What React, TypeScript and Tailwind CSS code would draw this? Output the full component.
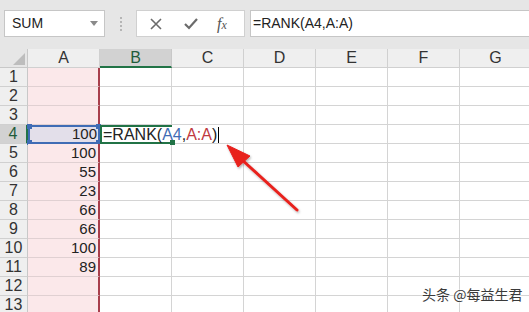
import React from 'react';

const cols = ['A', 'B', 'C', 'D', 'E', 'F', 'G'];
const values: Record<number, string> = { 4: '100', 5: '100', 6: '55', 7: '23', 8: '66', 9: '66', 10: '100', 11: '89' };
const rows = Array.from({ length: 13 }, (_, i) => i + 1);

const font = { fontFamily: '"Liberation Sans", Arial, sans-serif' };

function Handle({ className }: { className: string }) {
  return <span className={`absolute w-[5px] h-[5px] ${className}`} />;
}

function Toolbar() {
  return (
    <div className="h-[49px] bg-[#e6e6e6] flex items-start pt-[10px]">
      {/* Name box */}
      <div className="ml-[4px] w-[101px] h-[27px] bg-white border border-[#c6c6c6] flex items-center justify-between pl-[7px] pr-[6px]">
        <span className="text-[14px] text-[#222]">SUM</span>
        <span className="w-0 h-0 border-l-[4px] border-r-[4px] border-t-[5px] border-l-transparent border-r-transparent border-t-[#8a8a8a]" />
      </div>
      <div className="w-[31px] h-[27px] flex flex-col items-center justify-center gap-[2px]">
        {[0, 1, 2, 3].map((i) => (
          <span key={i} className="w-[2px] h-[2px] bg-[#b5b5b5]" />
        ))}
      </div>
      {/* Buttons */}
      <div className="w-[109px] h-[27px] bg-white border border-[#d0d0d0] flex items-center pl-[12px]">
        <svg width="14" height="14" viewBox="0 0 14 14">
          <path d="M2 2 L12 12 M12 2 L2 12" stroke="#6b6b6b" strokeWidth="1.6" />
        </svg>
        <svg className="ml-[20px]" width="16" height="14" viewBox="0 0 16 14">
          <path d="M2 7 L6 11 L14 2" stroke="#6b6b6b" strokeWidth="2.2" fill="none" />
        </svg>
        <span className="ml-[18px] text-[16px] italic text-[#555] leading-none" style={{ fontFamily: '"Liberation Serif", serif' }}>
          f<span className="text-[12px]">x</span>
        </span>
      </div>
      {/* Formula input */}
      <div className="ml-[5px] flex-1 h-[27px] bg-white border border-r-0 border-[#c6c6c6] flex items-center pl-[2px]">
        <span className="text-[14px] text-[#222]">=RANK(A4,A:A)</span>
      </div>
    </div>
  );
}

function HeaderRow() {
  return (
    <div className="flex h-[19px]">
      <div className="w-[28px] shrink-0 bg-[#e6e6e6] border-r border-b border-[#c8c8c8] relative">
        <svg className="absolute right-[2px] bottom-[2px]" width="12" height="12" viewBox="0 0 12 12">
          <polygon points="12,0 12,12 0,12" fill="#bdbdbd" />
        </svg>
      </div>
      {cols.map((c) => (
        <div
          key={c}
          className={`w-[72px] shrink-0 flex items-center justify-center text-[16px] ${
            c === 'B'
              ? 'bg-[#d2d2d2] border-b-2 border-b-[#217346] border-r border-r-[#c8c8c8] text-[#1f5c3a]'
              : 'bg-[#efefef] border-r border-b border-[#d0d0d0] text-[#333]'
          }`}
        >
          {c}
        </div>
      ))}
    </div>
  );
}

function Row({ n }: { n: number }) {
  const active = n === 4;
  return (
    <div className="flex h-[19px]">
      <div
        className={`w-[28px] shrink-0 flex items-center justify-center text-[16px] border-b border-[#d0d0d0] ${
          active ? 'bg-[#d2d2d2] border-r-2 border-r-[#217346] text-[#1f5c3a]' : 'bg-[#efefef] border-r border-r-[#c8c8c8] text-[#333]'
        }`}
      >
        {n}
      </div>
      {/* Column A */}
      <div
        className={`relative w-[72px] shrink-0 flex items-center justify-end text-[15px] text-[#222] ${
          active
            ? 'bg-[#e3dfea] border-2 border-[#3f6cb5] pr-[1px]'
            : 'bg-[#fbe8ea] border-r-2 border-r-[#a83e4c] border-b border-b-[#e0d0d2] pr-[2px]'
        }`}
      >
        {values[n]}
        {active && (
          <>
            <Handle className="bg-[#3f6cb5] -left-[3px] -top-[3px]" />
            <Handle className="bg-[#3f6cb5] -right-[3px] -top-[3px]" />
            <Handle className="bg-[#3f6cb5] -left-[3px] -bottom-[3px]" />
            <Handle className="bg-[#3f6cb5] -right-[3px] -bottom-[3px]" />
          </>
        )}
      </div>
      {/* Column B */}
      <div
        className={`relative w-[72px] shrink-0 flex items-center ${
          active ? 'border-t-2 border-b-2 border-l-2 border-t-[#217346] border-b-[#217346] border-l-[#217346] z-10 bg-white' : 'bg-white border-r border-b border-[#d4d4d4]'
        }`}
      >
        {active && (
          <>
            <span className="whitespace-nowrap text-[16px] leading-[15px] text-[#222] pl-[1px] flex items-center">
              =RANK(<span className="text-[#3f6cb5]">A4</span>,<span className="text-[#c0393f]">A:A</span>)
              <span className="inline-block w-[1px] h-[16px] bg-black ml-[1px]" />
            </span>
            <Handle className="bg-[#217346] -right-[3px] -bottom-[3px]" />
          </>
        )}
      </div>
      {cols.slice(2).map((c) => (
        <div key={c} className="w-[72px] shrink-0 bg-white border-r border-b border-[#d4d4d4]" />
      ))}
    </div>
  );
}

export default function App() {
  return (
    <div className="w-[529px] h-[312px] overflow-hidden bg-white relative" style={font}>
      <Toolbar />
      <HeaderRow />
      {rows.map((n) => (
        <Row key={n} n={n} />
      ))}

      {/* Annotation arrow */}
      <svg className="absolute left-0 top-0 pointer-events-none" width="529" height="312">
        <defs>
          <filter id="sh" x="-20%" y="-20%" width="140%" height="140%">
            <feDropShadow dx="1" dy="1.5" stdDeviation="1.2" floodColor="#000" floodOpacity="0.3" />
          </filter>
        </defs>
        <g filter="url(#sh)" fill="#e8201e" stroke="#e8201e">
          <line x1="297" y1="210" x2="240" y2="158" strokeWidth="3" strokeLinecap="round" />
          <polygon points="227,145 250,156 238,167" strokeWidth="1" strokeLinejoin="round" />
        </g>
      </svg>

      {/* Watermark */}
      <div
        className="absolute left-[422px] top-[284px] text-[14px] text-[#3a3a3a] whitespace-nowrap"
        style={{ fontFamily: '"Noto Sans CJK SC", sans-serif', textShadow: '0 0 2px #fff, 0 0 2px #fff' }}
      >
        头条 @每益生君
      </div>
    </div>
  );
}
